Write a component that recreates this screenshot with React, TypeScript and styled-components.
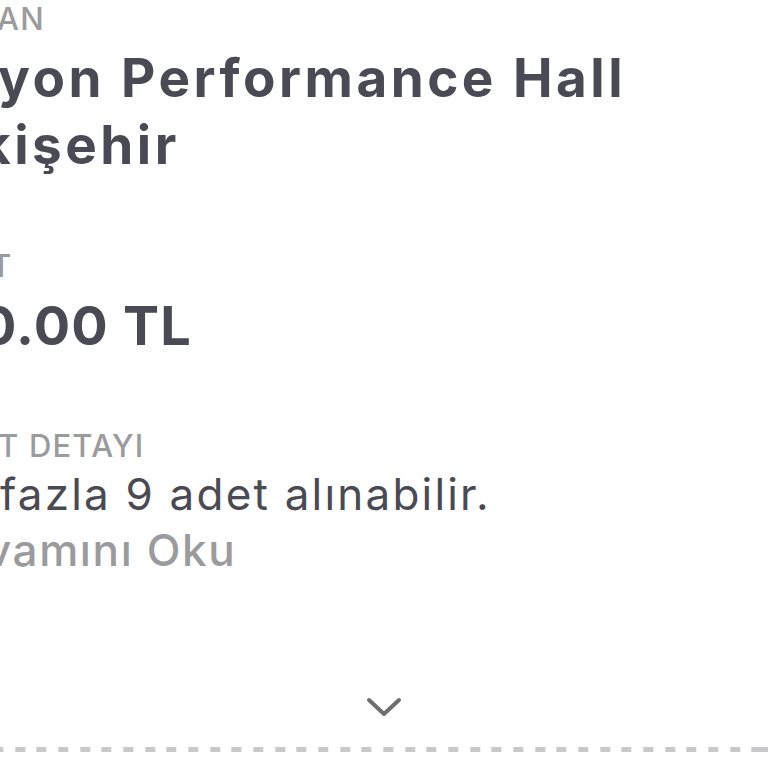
import styled, { createGlobalStyle } from "styled-components";

const GlobalStyle = createGlobalStyle`
    html, body {
        margin: 0;
        padding: 0;
        background: #ffffff;
        overflow: hidden;
    }
    body {
        font-family: Inter, "Noto Sans", "DejaVu Sans", sans-serif;
    }
`;

function App() {
    return (
        <Page>
            <GlobalStyle />
            <Details>
                <Field>
                    <Label $cut={3}>AN</Label>
                    <Title>
                        <Line $cut={2}>yon Performance Hall</Line>
                        <Line $cut={20}>kişehir</Line>
                    </Title>
                </Field>
                <Field>
                    <Label $cut={9}>T</Label>
                    <Price $cut={20}>0.00 TL</Price>
                </Field>
                <Field>
                    <Label $cut={2}>T DETAYI</Label>
                    <Body>fazla 9 adet alınabilir.</Body>
                    <More $cut={14}>vamını Oku</More>
                </Field>
            </Details>
            <Toggle aria-label="Detayları aç">
                <svg width="36" height="24" viewBox="0 0 36 24">
                    <polyline
                        points="3,4 18,18 33,4"
                        fill="none"
                        stroke="#6e6e73"
                        strokeWidth="4"
                        strokeLinecap="round"
                        strokeLinejoin="round"
                    />
                </svg>
            </Toggle>
            <Divider />
        </Page>
    );
}

const Page = styled.div`
    width: 768px;
    height: 768px;
    display: flex;
    flex-direction: column;
    overflow: hidden;
`;
const Details = styled.div`
    display: flex;
    flex-direction: column;
    gap: 67px;
    margin-top: -1px;
`;
const Field = styled.section`
    display: flex;
    flex-direction: column;
`;
const Label = styled.div<{ $cut?: number }>`
    font-size: 31px;
    line-height: 40px;
    font-weight: 500;
    letter-spacing: 1.2px;
    color: #9b9b9d;
    margin-left: ${(props) => -(props.$cut ?? 0)}px;
    margin-bottom: 6px;
    white-space: nowrap;
`;
const Title = styled.h1`
    margin: 0;
    font-size: 53px;
    line-height: 67px;
    font-weight: 700;
    letter-spacing: 3.5px;
    color: #4a4a55;
`;
const Line = styled.div<{ $cut?: number }>`
    margin-left: ${(props) => -(props.$cut ?? 0)}px;
    white-space: nowrap;
`;
const Price = styled.div<{ $cut?: number }>`
    font-size: 54px;
    line-height: 67px;
    font-weight: 700;
    letter-spacing: 1.2px;
    color: #4a4a55;
    margin-left: ${(props) => -(props.$cut ?? 0)}px;
    white-space: nowrap;
`;
const Body = styled.p`
    margin: -6px 0 0;
    font-size: 44px;
    line-height: 56px;
    font-weight: 400;
    letter-spacing: 2.2px;
    color: #4a4a52;
    white-space: nowrap;
`;
const More = styled.a<{ $cut?: number }>`
    display: block;
    font-size: 44px;
    line-height: 56px;
    font-weight: 500;
    letter-spacing: 1.6px;
    color: #9b9b9d;
    margin-left: ${(props) => -(props.$cut ?? 0)}px;
    white-space: nowrap;
`;
const Toggle = styled.button`
    align-self: center;
    margin-top: 118px;
    padding: 0;
    border: 0;
    background: none;
    display: flex;
    line-height: 0;
`;
const Divider = styled.div`
    margin-top: 27px;
    height: 5px;
    background-image: repeating-linear-gradient(
        to right,
        #c9c9cb 0 10px,
        transparent 10px 21.67px
    );
    background-position: -6.7px 0;
`;

export default App;
